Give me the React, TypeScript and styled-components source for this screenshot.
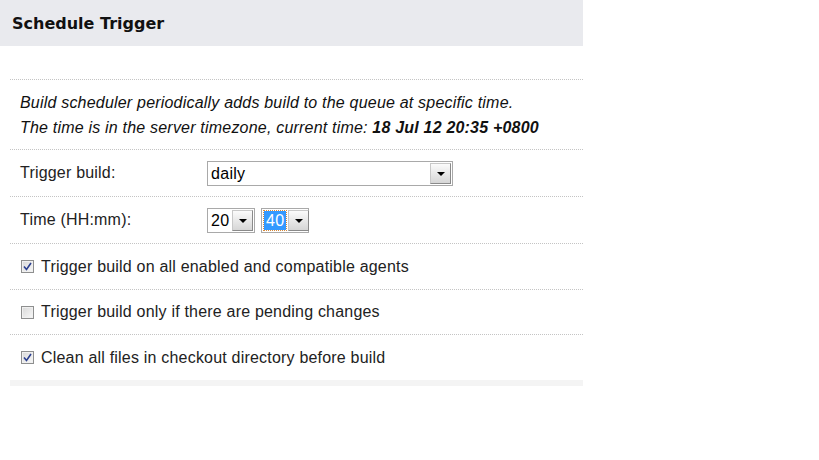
import React from "react";
import styled, { createGlobalStyle } from "styled-components";

const GlobalStyle = createGlobalStyle`
  body {
    margin: 0;
    background: #fff;
    font-family: "Liberation Sans", Arial, sans-serif;
    color: #000;
  }
`;

const Header = styled("div")`
  width: 583px;
  height: 46px;
  background: #e9eaee;
  display: flex;
  align-items: center;
  padding-left: 12px;
  box-sizing: border-box;
  h2 {
    margin: 0;
    font-family: "DejaVu Sans", Verdana, sans-serif;
    font-weight: bold;
    font-size: 16px;
    color: #111;
  }
`;

const Form = styled("div")`
  width: 573px;
  margin: 33px 0 0 10px;
  font-size: 16px;
  letter-spacing: 0.2px;
`;

const Row = styled("div")<{ $height?: number }>`
  display: flex;
  align-items: center;
  box-sizing: border-box;
  height: ${(p) => (p.$height ? `${p.$height}px` : "auto")};
  padding: 0 10px;
  border-top: 1px dotted #c4c4c4;
`;

const Description = styled("div")`
  border-top: 1px dotted #c4c4c4;
  padding: 10px 10px 9px;
  font-style: italic;
  line-height: 25px;
  color: #111;
  b {
    font-weight: bold;
  }
`;

const Label = styled("label")`
  width: 187px;
  color: #222;
`;

const Select = styled("div")<{ $width: number }>`
  display: flex;
  align-items: center;
  gap: 1px;
  box-sizing: border-box;
  width: ${(p) => p.$width}px;
  height: 25px;
  border: 1px solid #a9a9a9;
  padding: 1px;
  background: #fff;
`;

const Value = styled("span")<{ $selected?: boolean }>`
  flex: 1;
  padding: 0 2px;
  line-height: 19px;
  font-size: 16px;
  letter-spacing: 0.3px;
  color: ${(p) => (p.$selected ? "#fff" : "#000")};
  background: ${(p) => (p.$selected ? "#3399ff" : "transparent")};
  outline: ${(p) => (p.$selected ? "1px dotted #d88a3a" : "none")};
  margin: ${(p) => (p.$selected ? "0 1px" : "0")};
`;

const Arrow = styled("span")`
  display: flex;
  align-items: center;
  justify-content: center;
  box-sizing: border-box;
  flex-shrink: 0;
  width: 21px;
  height: 21px;
  border: 1px solid #8a8a8a;
  border-top-color: #c8c8c8;
  border-left-color: #c8c8c8;
  background: linear-gradient(#fbfbfb, #d6d6d6);
  &::after {
    content: "";
    border-left: 4px solid transparent;
    border-right: 4px solid transparent;
    border-top: 4px solid #000;
    margin-top: 1px;
  }
`;

const TimeGroup = styled("div")`
  display: flex;
  gap: 6px;
`;

const Check = styled("span")<{ $checked?: boolean }>`
  display: inline-flex;
  align-items: center;
  justify-content: center;
  box-sizing: border-box;
  flex-shrink: 0;
  width: 13px;
  height: 13px;
  border: 1px solid #8e8f8f;
  background: linear-gradient(135deg, #d8d8d8, #f8f8f8);
  box-shadow: inset 0 0 0 1px #f0f0f0;
  margin: 0 7px 0 1px;
  svg {
    display: ${(p) => (p.$checked ? "block" : "none")};
  }
`;

const CheckText = styled("span")`
  color: #222;
`;

const BottomBar = styled("div")`
  height: 6px;
  background: #f4f4f4;
`;

const CheckRow = ({ checked, text, height }: { checked?: boolean; text: string; height: number }) => (
  <Row $height={height}>
    <Check $checked={checked}>
      <svg width="9" height="9" viewBox="0 0 9 9">
        <path d="M1 4.5 L3.5 7.5 L8 1" fill="none" stroke="#2b3f8f" strokeWidth="1.6" />
      </svg>
    </Check>
    <CheckText>{text}</CheckText>
  </Row>
);

export default function App() {
  return (
    <>
      <GlobalStyle />
      <Header>
        <h2>Schedule Trigger</h2>
      </Header>
      <Form>
        <Description>
          Build scheduler periodically adds build to the queue at specific time.
          <br />
          The time is in the server timezone, current time: <b>18 Jul 12 20:35 +0800</b>
        </Description>
        <Row $height={47}>
          <Label>Trigger build:</Label>
          <Select $width={246}>
            <Value>daily</Value>
            <Arrow />
          </Select>
        </Row>
        <Row $height={47}>
          <Label>Time (HH:mm):</Label>
          <TimeGroup>
            <Select $width={48}>
              <Value>20</Value>
              <Arrow />
            </Select>
            <Select $width={48}>
              <Value $selected>40</Value>
              <Arrow />
            </Select>
          </TimeGroup>
        </Row>
        <CheckRow checked height={46} text="Trigger build on all enabled and compatible agents" />
        <CheckRow height={45} text="Trigger build only if there are pending changes" />
        <CheckRow checked height={46} text="Clean all files in checkout directory before build" />
        <BottomBar />
      </Form>
    </>
  );
}
